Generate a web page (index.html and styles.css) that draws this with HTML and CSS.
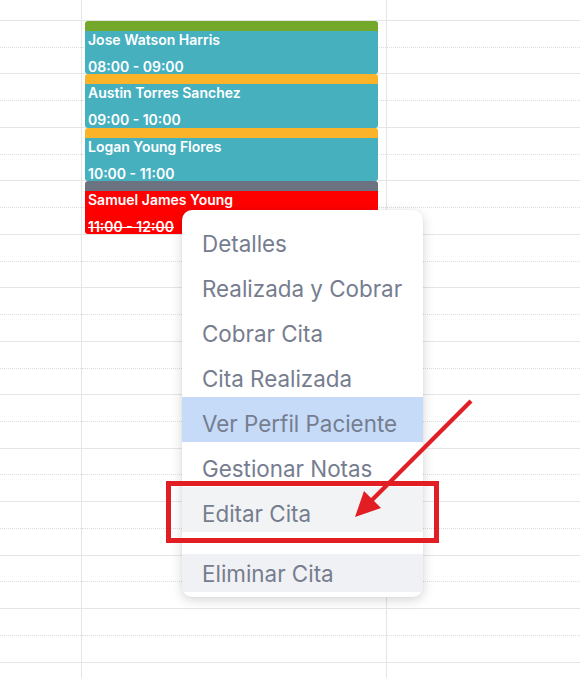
FILE: index.html
```html
<!DOCTYPE html>
<html lang="es">
<head>
<meta charset="utf-8">
<title>Agenda</title>
<link rel="stylesheet" href="styles.css">
</head>
<body>
<div class="calendar">
  <div class="col axis">
    <div class="col-head"></div>
    <div class="slot hour"></div><div class="slot half"></div>
    <div class="slot hour"></div><div class="slot half"></div>
    <div class="slot hour"></div><div class="slot half"></div>
    <div class="slot hour"></div><div class="slot half"></div>
    <div class="slot hour"></div><div class="slot half"></div>
    <div class="slot hour"></div><div class="slot half"></div>
    <div class="slot hour"></div><div class="slot half"></div>
    <div class="slot hour"></div><div class="slot half"></div>
    <div class="slot hour"></div><div class="slot half"></div>
    <div class="slot hour"></div><div class="slot half"></div>
    <div class="slot hour"></div><div class="slot half"></div>
    <div class="slot hour"></div><div class="slot half"></div>
    <div class="slot hour"></div><div class="slot half"></div>
  </div>
  <div class="col day">
    <div class="col-head"></div>
    <div class="slot hour"></div><div class="slot half"></div>
    <div class="slot hour"></div><div class="slot half"></div>
    <div class="slot hour"></div><div class="slot half"></div>
    <div class="slot hour"></div><div class="slot half"></div>
    <div class="slot hour"></div><div class="slot half"></div>
    <div class="slot hour"></div><div class="slot half"></div>
    <div class="slot hour"></div><div class="slot half"></div>
    <div class="slot hour"></div><div class="slot half"></div>
    <div class="slot hour"></div><div class="slot half"></div>
    <div class="slot hour"></div><div class="slot half"></div>
    <div class="slot hour"></div><div class="slot half"></div>
    <div class="slot hour"></div><div class="slot half"></div>
    <div class="slot hour"></div><div class="slot half"></div>
    <div class="events">
      <div class="event ev-green">
        <div class="ev-name">Jose Watson Harris</div>
        <div class="ev-time">08:00 - 09:00</div>
      </div>
      <div class="event ev-orange">
        <div class="ev-name">Austin Torres Sanchez</div>
        <div class="ev-time">09:00 - 10:00</div>
      </div>
      <div class="event ev-orange">
        <div class="ev-name">Logan Young Flores</div>
        <div class="ev-time">10:00 - 11:00</div>
      </div>
      <div class="event ev-cancel">
        <div class="ev-name">Samuel James Young</div>
        <div class="ev-time strike">11:00 - 12:00</div>
      </div>
    </div>
  </div>
  <div class="col rest">
    <div class="col-head"></div>
    <div class="slot hour"></div><div class="slot half"></div>
    <div class="slot hour"></div><div class="slot half"></div>
    <div class="slot hour"></div><div class="slot half"></div>
    <div class="slot hour"></div><div class="slot half"></div>
    <div class="slot hour"></div><div class="slot half"></div>
    <div class="slot hour"></div><div class="slot half"></div>
    <div class="slot hour"></div><div class="slot half"></div>
    <div class="slot hour"></div><div class="slot half"></div>
    <div class="slot hour"></div><div class="slot half"></div>
    <div class="slot hour"></div><div class="slot half"></div>
    <div class="slot hour"></div><div class="slot half"></div>
    <div class="slot hour"></div><div class="slot half"></div>
    <div class="slot hour"></div><div class="slot half"></div>
  </div>
</div>

<ul class="menu">
  <li class="item">Detalles</li>
  <li class="item">Realizada y Cobrar</li>
  <li class="item">Cobrar Cita</li>
  <li class="item">Cita Realizada</li>
  <li class="item selected">Ver Perfil Paciente</li>
  <li class="item">Gestionar Notas</li>
  <li class="item hovered">Editar Cita</li>
  <li class="divider"></li>
  <li class="item danger">Eliminar Cita</li>
</ul>

<div class="callout"></div>
<svg class="arrow" viewBox="350 395 125 125" width="125" height="125">
  <line x1="471" y1="401" x2="371" y2="501" stroke="#e21e25" stroke-width="4.2"/>
  <polygon points="355,517 364,491 381,508" fill="#e21e25"/>
</svg>
</body>
</html>
```

FILE: styles.css
```css
* { box-sizing: border-box; }
html, body {
  margin: 0;
  padding: 0;
  background: #ffffff;
}
body {
  width: 580px;
  height: 678px;
  overflow: hidden;
  position: relative;
  font-family: Inter, "Noto Sans", sans-serif;
}
.calendar {
  display: flex;
  height: 678px;
  overflow: hidden;
}
.col {
  display: flex;
  flex-direction: column;
  position: relative;
  height: 678px;
  overflow: hidden;
}
.axis {
  width: 82px;
  border-right: 1px solid #e5e5e5;
}
.day {
  width: 305px;
  border-right: 1px solid #e5e5e5;
}
.rest {
  flex: 1;
}
.col-head {
  height: 20px;
  flex: none;
}
.slot {
  height: 26.735px;
  flex: none;
}
.slot.hour {
  border-top: 1px solid #e5e5e5;
}
.slot.half {
  border-top: 1px dotted #dedede;
}
.events {
  position: absolute;
  top: 21px;
  left: 3px;
  width: 293px;
  display: flex;
  flex-direction: column;
}
.event {
  height: 53.33px;
  border-top: 10px solid #74a82b;
  border-radius: 3px;
  background: #47b0bf;
  color: #ffffff;
  padding-left: 3px;
  overflow: hidden;
  font-size: 14px;
  font-weight: 600;
}
.ev-green { border-top-color: #74a82b; }
.ev-orange { border-top-color: #fbb429; }
.ev-cancel {
  border-top-color: #6b7280;
  background: #ff0000;
}
.ev-name {
  line-height: 17px;
}
.ev-time {
  line-height: 17px;
  margin-top: 10px;
}
.strike {
  text-decoration: line-through;
}
.menu {
  position: absolute;
  left: 182px;
  top: 210px;
  width: 241px;
  margin: 0;
  padding: 7px 0 5px;
  list-style: none;
  background: #ffffff;
  border-radius: 10px;
  box-shadow: 0 3px 12px rgba(0, 0, 0, 0.17), 0 0 2px rgba(0, 0, 0, 0.05);
  overflow: hidden;
}
.item {
  height: 45px;
  padding: 8px 0 0 20px;
  line-height: 37px;
  font-size: 22.4px;
  color: #767d8f;
  white-space: nowrap;
}
.item.selected { background: #c5dbf8; }
.item.hovered { background: #f2f3f5; }
.divider { height: 22px; }
.item.danger {
  height: 38px;
  padding-top: 1px;
  background: #f0f1f4;
}
.callout {
  position: absolute;
  left: 166px;
  top: 481px;
  width: 273px;
  height: 62px;
  border: 5px solid #e21e25;
}
.arrow {
  position: absolute;
  left: 350px;
  top: 395px;
}
```
